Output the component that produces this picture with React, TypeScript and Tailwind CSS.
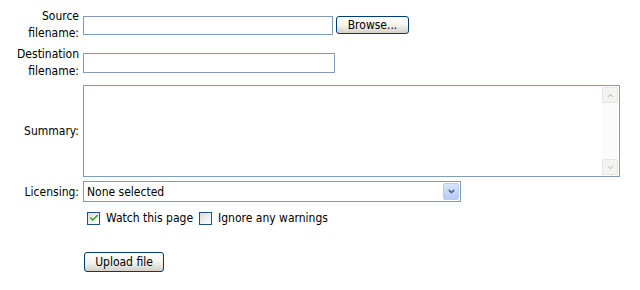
import { Check, ChevronDown, ChevronUp } from 'lucide-react'

const font = { fontFamily: '"DejaVu Sans Condensed", "DejaVu Sans", Tahoma, sans-serif' }

function XpButton({ label, className }: { label: string; className: string }) {
  return (
    <button
      className={`flex items-center justify-center rounded-[3px] border border-[#003c74] bg-gradient-to-b from-white via-[#f4f4f0] to-[#d6d0c5] text-[12px] text-black ${className}`}
    >
      {label}
    </button>
  )
}

function Checkbox({ checked }: { checked?: boolean }) {
  return (
    <span className="flex h-[13px] w-[13px] items-center justify-center border border-[#1c5180] bg-gradient-to-br from-[#dcdcd7] to-white">
      {checked && <Check className="h-[10px] w-[10px] text-[#21a121]" strokeWidth={3.5} />}
    </span>
  )
}

export default function App() {
  return (
    <div className="w-[640px] h-[290px] bg-white pt-[6px] text-[12px] text-black" style={font}>
      {/* Source filename */}
      <div className="flex h-[38px] items-center">
        <div className="w-[80px] pr-[1px] text-right leading-[17px]">
          <div>Source</div>
          <div>filename:</div>
        </div>
        <div className="ml-[3px] h-[19px] w-[250px] border border-[#7f9db9] bg-white" />
        <XpButton label="Browse..." className="ml-[3px] h-[18px] w-[73px]" />
      </div>

      {/* Destination filename */}
      <div className="flex h-[38px] items-center">
        <div className="w-[80px] pr-[1px] text-right leading-[17px]">
          <div>Destination</div>
          <div>filename:</div>
        </div>
        <div className="ml-[3px] h-[20px] w-[252px] border border-[#7f9db9] bg-white" />
      </div>

      {/* Summary */}
      <div className="flex items-center py-[3px]">
        <div className="w-[80px] pr-[1px] text-right leading-[16px]">Summary:</div>
        <div className="ml-[3px] flex h-[92px] w-[537px] border border-[#7f9db9] bg-white">
          <div className="flex-1" />
          <div className="my-[1px] mr-[1px] flex w-[16px] flex-col justify-between bg-[#fbfbf9]">
            <span className="flex h-[16px] items-center justify-center rounded-[2px] border border-[#e6e6e0] bg-[#f3f3ef]">
              <ChevronUp className="h-[9px] w-[9px] text-[#c9c9c3]" strokeWidth={3} />
            </span>
            <span className="flex h-[16px] items-center justify-center rounded-[2px] border border-[#e6e6e0] bg-[#f3f3ef]">
              <ChevronDown className="h-[9px] w-[9px] text-[#c9c9c3]" strokeWidth={3} />
            </span>
          </div>
        </div>
      </div>

      {/* Licensing */}
      <div className="flex items-center pt-[1px]">
        <div className="w-[80px] pr-[1px] text-right leading-[16px]">Licensing:</div>
        <div className="ml-[3px] flex h-[21px] w-[378px] items-center border border-[#7f9db9] bg-white">
          <span className="flex-1 pl-[3px] leading-[16px]">None selected</span>
          <span className="mr-[1px] flex h-[17px] w-[16px] items-center justify-center rounded-[2px] border border-[#b9caf5] bg-gradient-to-b from-[#dbe5fd] to-[#b6c9f7]">
            <ChevronDown className="h-[9px] w-[9px] text-[#4d6185]" strokeWidth={4} />
          </span>
        </div>
      </div>

      {/* Options */}
      <div className="ml-[87px] mt-[9px] flex h-[14px] items-center">
        <Checkbox checked />
        <span className="ml-[6px] leading-[14px]">Watch this page</span>
        <span className="ml-[6px]">
          <Checkbox />
        </span>
        <span className="ml-[6px] leading-[14px]">Ignore any warnings</span>
      </div>

      <div className="ml-[84px] mt-[27px]">
        <XpButton label="Upload file" className="h-[20px] w-[80px]" />
      </div>
    </div>
  )
}
